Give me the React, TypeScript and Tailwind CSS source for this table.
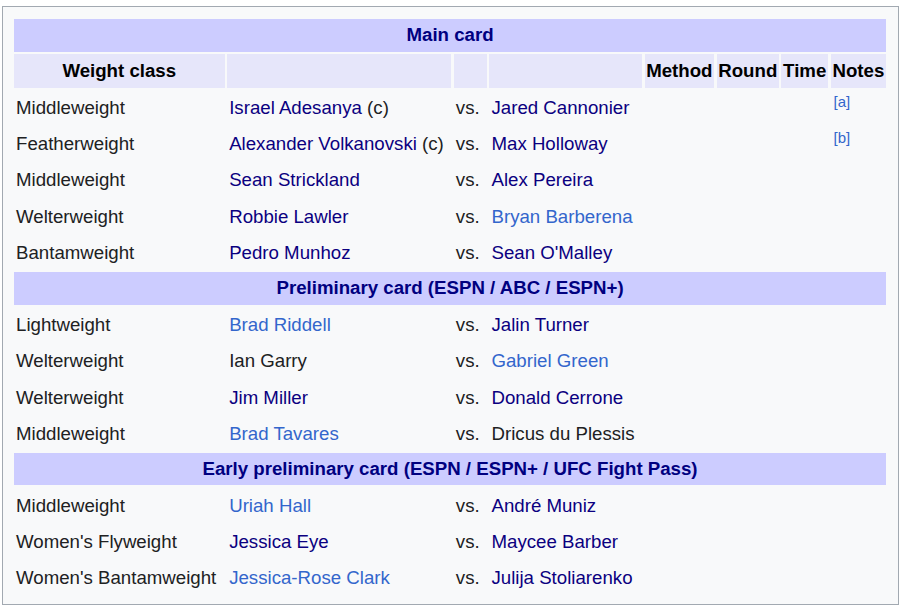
import React from "react";

type Part = { t: string; c?: "v" | "b" | "k" };
type Row = { w: string; a: Part[]; b: Part[]; note?: string };

const NAVY = "text-[#0b0080]";
const BLUE = "text-[#3366cc]";
const DARK = "text-[#202122]";

function cls(c?: "v" | "b" | "k") {
  if (c === "v") return NAVY;
  if (c === "b") return BLUE;
  return DARK;
}

const main: Row[] = [
  { w: "Middleweight", a: [{ t: "Israel Adesanya", c: "v" }, { t: " (c)" }], b: [{ t: "Jared Cannonier", c: "v" }], note: "[a]" },
  { w: "Featherweight", a: [{ t: "Alexander Volkanovski", c: "v" }, { t: " (c)" }], b: [{ t: "Max Holloway", c: "v" }], note: "[b]" },
  { w: "Middleweight", a: [{ t: "Sean Strickland", c: "v" }], b: [{ t: "Alex Pereira", c: "v" }] },
  { w: "Welterweight", a: [{ t: "Robbie Lawler", c: "v" }], b: [{ t: "Bryan Barberena", c: "b" }] },
  { w: "Bantamweight", a: [{ t: "Pedro Munhoz", c: "v" }], b: [{ t: "Sean O'Malley", c: "v" }] },
];

const prelim: Row[] = [
  { w: "Lightweight", a: [{ t: "Brad Riddell", c: "b" }], b: [{ t: "Jalin Turner", c: "v" }] },
  { w: "Welterweight", a: [{ t: "Ian Garry" }], b: [{ t: "Gabriel Green", c: "b" }] },
  { w: "Welterweight", a: [{ t: "Jim Miller", c: "v" }], b: [{ t: "Donald Cerrone", c: "v" }] },
  { w: "Middleweight", a: [{ t: "Brad Tavares", c: "b" }], b: [{ t: "Dricus du Plessis" }] },
];

const early: Row[] = [
  { w: "Middleweight", a: [{ t: "Uriah Hall", c: "b" }], b: [{ t: "André Muniz", c: "v" }] },
  { w: "Women's Flyweight", a: [{ t: "Jessica Eye", c: "v" }], b: [{ t: "Maycee Barber", c: "v" }] },
  { w: "Women's Bantamweight", a: [{ t: "Jessica-Rose Clark", c: "b" }], b: [{ t: "Julija Stoliarenko", c: "v" }] },
];

function Section({ title }: { title: string }) {
  return (
    <div className="col-span-8 h-[32.67px] bg-[#ccccff] flex items-center justify-center font-bold text-[#000080]">
      {title}
    </div>
  );
}

function Parts({ parts }: { parts: Part[] }) {
  return (
    <span className="whitespace-nowrap">
      {parts.map((p, i) => (
        <span key={i} className={cls(p.c)}>
          {p.t}
        </span>
      ))}
    </span>
  );
}

function DataRow({ r }: { r: Row }) {
  const cell = "h-[33.7px] flex items-center px-[2px] pt-[2px] whitespace-nowrap";
  return (
    <>
      <div className={`${cell} ${DARK}`}>{r.w}</div>
      <div className={cell}>
        <Parts parts={r.a} />
      </div>
      <div className={`${cell} ${DARK}`}>vs.</div>
      <div className={cell}>
        <Parts parts={r.b} />
      </div>
      <div className={cell}></div>
      <div className={cell}></div>
      <div className={cell}></div>
      <div className={`${cell} pl-[3px]`}>
        {r.note ? (
          <span className={`${BLUE} text-[15px] leading-none relative -top-[7px]`}>{r.note}</span>
        ) : null}
      </div>
    </>
  );
}

export default function App() {
  const th = "h-[33.33px] bg-[#e6e6fa] flex items-center justify-center font-bold text-[#000000] px-[1px] whitespace-nowrap";
  return (
    <div className="w-[900px] h-[608px] bg-white pt-[6px] pl-[2px]" style={{ fontFamily: '"Liberation Sans", Arial, sans-serif' }}>
      <div className="w-[897px] h-[599px] border border-[#a2a9b1] bg-[#f8f9fa] pt-[12px] pl-[11px] text-[18.67px] leading-none">
        <div className="grid grid-cols-[210.5px_224px_33px_152.5px_69.5px_62px_46.5px_55.5px] gap-[2.67px]">
          <Section title="Main card" />
          <div className={th}>Weight class</div>
          <div className={th}></div>
          <div className={th}></div>
          <div className={th}></div>
          <div className={th}>Method</div>
          <div className={th}>Round</div>
          <div className={th}>Time</div>
          <div className={th}>Notes</div>
          {main.map((r, i) => (
            <DataRow key={"m" + i} r={r} />
          ))}
          <Section title="Preliminary card (ESPN / ABC / ESPN+)" />
          {prelim.map((r, i) => (
            <DataRow key={"p" + i} r={r} />
          ))}
          <Section title="Early preliminary card (ESPN / ESPN+ / UFC Fight Pass)" />
          {early.map((r, i) => (
            <DataRow key={"e" + i} r={r} />
          ))}
        </div>
      </div>
    </div>
  );
}
